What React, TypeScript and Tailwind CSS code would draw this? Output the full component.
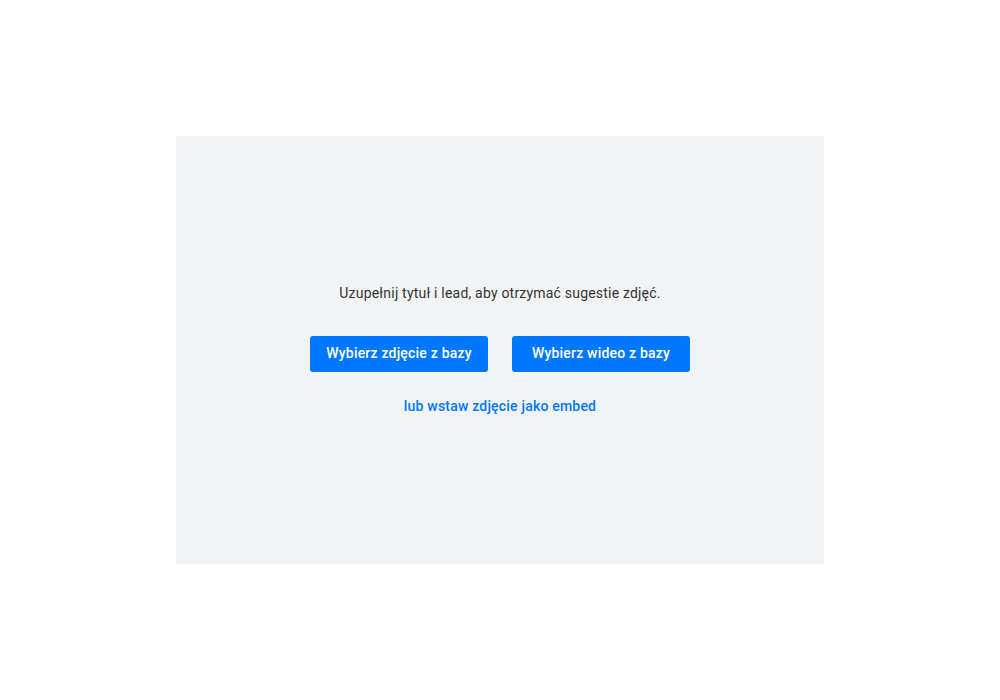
import React from 'react';

const App: React.FC = () => {
  return (
    <div className="w-[1000px] h-[700px] bg-white flex items-center justify-center" style={{ fontFamily: 'Roboto, "Noto Sans", sans-serif' }}>
      <div className="w-[648px] h-[428px] bg-[#f2f3f5] flex flex-col items-center justify-center pb-[2px]">
        <p className="text-[14px] leading-5 text-[#333333] tracking-[0.2px]">Uzupełnij tytuł i lead, aby otrzymać sugestie zdjęć.</p>
        <div className="flex gap-6 mt-[33px]">
          <button className="w-[178px] h-9 rounded-[3px] bg-[#0077ff] text-white text-[14px] font-medium tracking-[0.2px]">
            Wybierz zdjęcie z bazy
          </button>
          <button className="w-[178px] h-9 rounded-[3px] bg-[#0077ff] text-white text-[14px] font-medium tracking-[0.2px]">
            Wybierz wideo z bazy
          </button>
        </div>
        <a className="mt-6 text-[14px] leading-5 font-medium text-[#0077ff] tracking-[0.2px] cursor-pointer">lub wstaw zdjęcie jako embed</a>
      </div>
    </div>
  );
};

export default App;
